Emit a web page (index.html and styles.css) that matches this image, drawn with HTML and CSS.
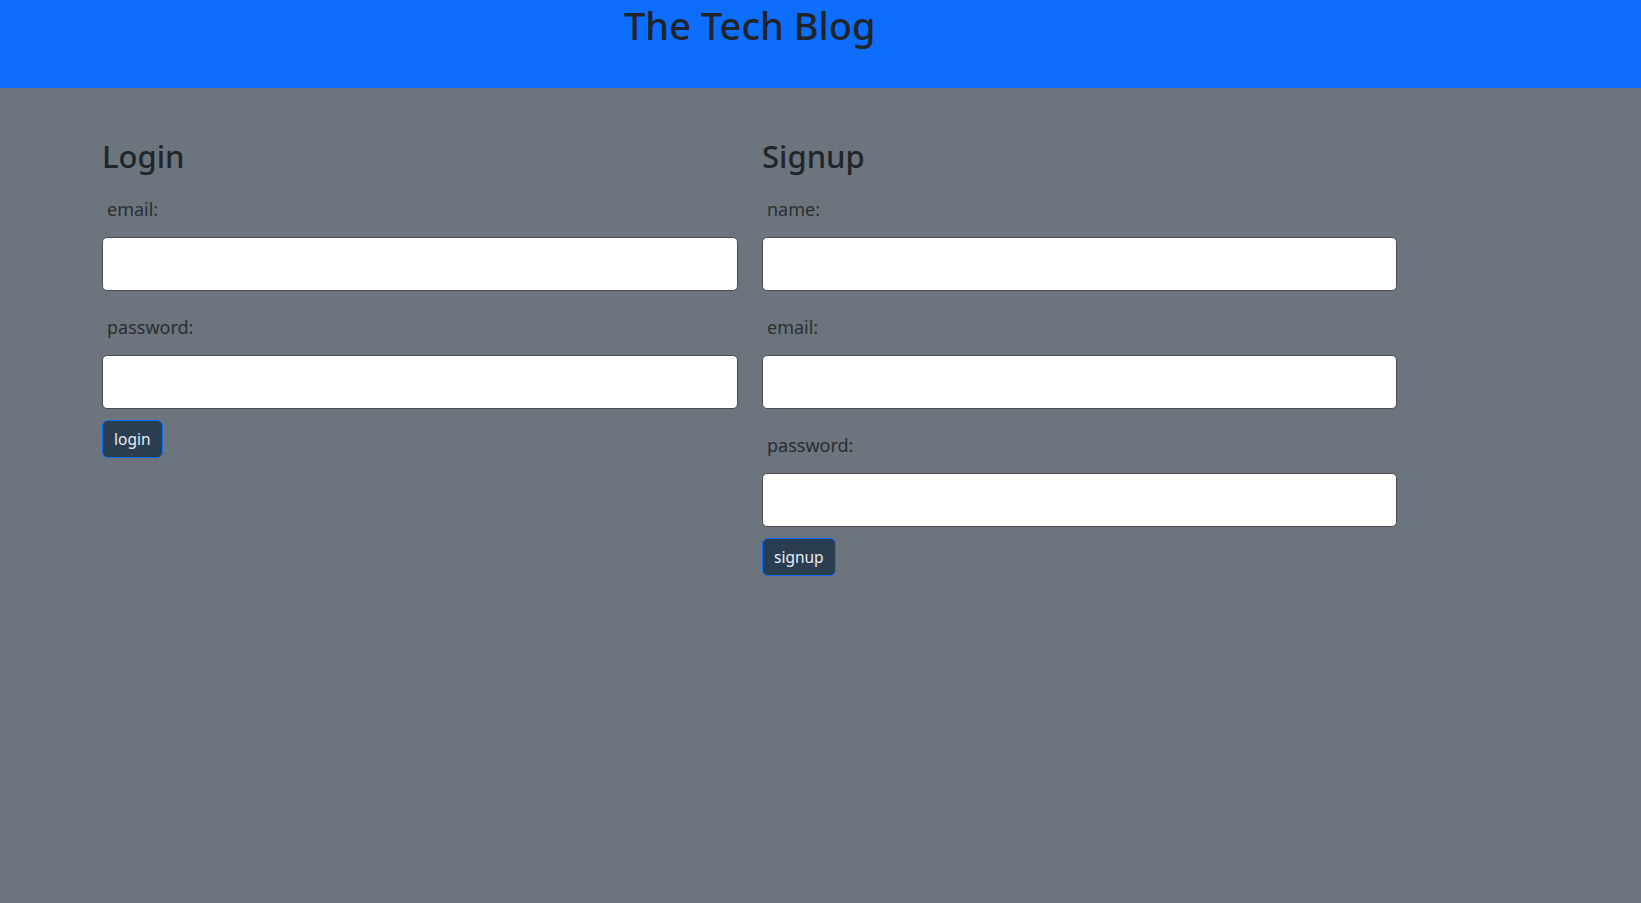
FILE: index.html
```html
<!DOCTYPE html>
<html lang="en">
<head>
<meta charset="utf-8">
<title>The Tech Blog</title>
<link rel="stylesheet" href="styles.css">
</head>
<body>
<header class="site-header">
  <h1 class="site-title">The Tech Blog</h1>
</header>
<main class="main">
  <section class="panel">
    <h2 class="panel-title">Login</h2>
    <form class="form">
      <div class="field">
        <label class="field-label" for="login-email">email:</label>
        <input class="field-input" id="login-email" type="email">
      </div>
      <div class="field">
        <label class="field-label" for="login-password">password:</label>
        <input class="field-input" id="login-password" type="password">
      </div>
      <button class="btn" type="button">login</button>
    </form>
  </section>
  <section class="panel">
    <h2 class="panel-title">Signup</h2>
    <form class="form">
      <div class="field">
        <label class="field-label" for="signup-name">name:</label>
        <input class="field-input" id="signup-name" type="text">
      </div>
      <div class="field">
        <label class="field-label" for="signup-email">email:</label>
        <input class="field-input" id="signup-email" type="email">
      </div>
      <div class="field">
        <label class="field-label" for="signup-password">password:</label>
        <input class="field-input" id="signup-password" type="password">
      </div>
      <button class="btn" type="button">signup</button>
    </form>
  </section>
</main>
</body>
</html>
```

FILE: styles.css
```css
* { box-sizing: border-box; }

html, body {
  margin: 0;
  height: 100%;
}

body {
  background: #6c757d;
  color: #212529;
  font-family: "Segoe UI", "Noto Sans", "Open Sans", sans-serif;
}

.site-header {
  background: #0d6efd;
  height: 88px;
  padding-left: 624px;
  padding-top: 1px;
}

.site-title {
  margin: 0;
  font-size: 38px;
  line-height: 48px;
  font-weight: 500;
  color: #212529;
}

.main {
  display: grid;
  grid-template-columns: 636px 635px;
  column-gap: 24px;
  padding: 49px 0 0 102px;
  align-items: start;
}

.panel-title {
  margin: 0;
  font-size: 31px;
  line-height: 38px;
  font-weight: 500;
}

.form {
  display: flex;
  flex-direction: column;
  align-items: flex-start;
  padding-top: 19px;
}

.field {
  display: flex;
  flex-direction: column;
  width: 100%;
  margin-bottom: 21px;
}

.field:last-of-type {
  margin-bottom: 11px;
}

.field-label {
  font-size: 18px;
  line-height: 28px;
  padding-top: 1px;
  padding-left: 5px;
  color: #2b2d30;
  margin-bottom: 14px;
}

.field-input {
  display: block;
  width: 100%;
  height: 54px;
  border: 1px solid #474a4e;
  border-radius: 5px;
  background: #fff;
  font: inherit;
  padding: 6px 12px;
}

.btn {
  background: #2b3d50;
  color: #e8eef3;
  border: 1px solid #0d6efd;
  border-radius: 6px;
  font-family: inherit;
  font-size: 15.5px;
  line-height: 24px;
  padding: 6px 11px;
  cursor: pointer;
}
```
